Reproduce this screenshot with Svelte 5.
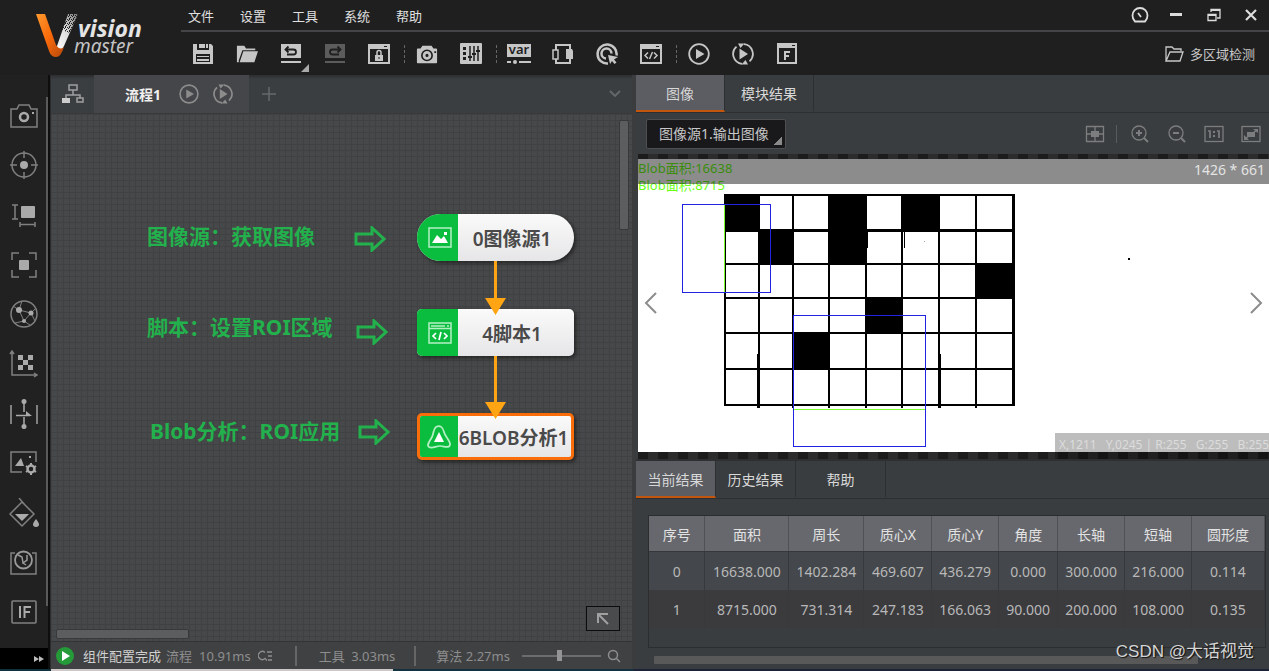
<script>
  const menus = ['文件', '设置', '工具', '系统', '帮助'];

  const toolGroups = [
    [
      { icon: 'save', label: '保存' },
      { icon: 'open', label: '打开' },
      { icon: 'undo', label: '撤销', more: true },
      { icon: 'redo', label: '重做', disabled: true },
      { icon: 'lock', label: '锁定' }
    ],
    [
      { icon: 'camera', label: '相机管理' },
      { icon: 'mixer', label: '控制器管理' }
    ],
    [
      { icon: 'var', label: '全局变量' },
      { icon: 'comm', label: '通信管理' },
      { icon: 'trigger', label: '全局触发' },
      { icon: 'code', label: '全局脚本' }
    ],
    [
      { icon: 'play', label: '单次执行' },
      { icon: 'loop', label: '连续执行' },
      { icon: 'form', label: '运行界面' }
    ]
  ];

  const windowButtons = [
    { icon: 'gauge', label: '性能' },
    { icon: 'minimize', label: '最小化' },
    { icon: 'restore', label: '还原' },
    { icon: 'close', label: '关闭' }
  ];

  const modules = [
    { icon: 'm-camera', label: '采集' },
    { icon: 'm-locate', label: '定位' },
    { icon: 'm-measure', label: '测量' },
    { icon: 'm-recognize', label: '识别' },
    { icon: 'm-deep', label: '深度学习' },
    { icon: 'm-calib', label: '标定' },
    { icon: 'm-align', label: '对位' },
    { icon: 'm-image', label: '图像处理' },
    { icon: 'm-color', label: '颜色处理' },
    { icon: 'm-defect', label: '缺陷检测' },
    { icon: 'm-logic', label: '逻辑工具' }
  ];

  const nodes = [
    { title: '0图像源1', icon: 'n-image', x: 366, y: 100, shape: 'round' },
    { title: '4脚本1', icon: 'n-script', x: 366, y: 195, shape: 'box' },
    { title: '6BLOB分析1', icon: 'n-blob', x: 366, y: 299, shape: 'box', selected: true }
  ];

  const notes = [
    { text: '图像源：获取图像', x: 96, y: 107, ax: 303, ay: 112 },
    { text: '脚本：设置ROI区域', x: 96, y: 198, ax: 305, ay: 205 },
    { text: 'Blob分析：ROI应用', x: 99, y: 302, ax: 307, ay: 305 }
  ];

  const viewButtons = [
    { icon: 'v-zoomin', label: '放大' },
    { icon: 'v-zoomout', label: '缩小' },
    { icon: 'v-actual', label: '1:1' },
    { icon: 'v-fit', label: '适应窗口' }
  ];

  // grid lines of the inspected image
  const xs = [87, 121, 155, 191, 228, 264, 301, 338, 375];
  const ys = [36, 71, 105, 139, 174, 210, 246];
  const filled = [
    [0, 0], [0, 3], [0, 5],
    [1, 1], [1, 3],
    [2, 7],
    [3, 4],
    [4, 2]
  ];

  const columns = [
    { name: '序号', width: 56 },
    { name: '面积', width: 84 },
    { name: '周长', width: 75 },
    { name: '质心X', width: 68 },
    { name: '质心Y', width: 67 },
    { name: '角度', width: 59 },
    { name: '长轴', width: 67 },
    { name: '短轴', width: 67 },
    { name: '圆形度', width: 73 }
  ];
  const totalWidth = columns.reduce((sum, c) => sum + c.width, 0);

  const rows = [
    ['0', '16638.000', '1402.284', '469.607', '436.279', '0.000', '300.000', '216.000', '0.114'],
    ['1', '8715.000', '731.314', '247.183', '166.063', '90.000', '200.000', '108.000', '0.135']
  ];

  let viewTab = $state('图像');
  let resultTab = $state('当前结果');
  let source = $state('图像源1.输出图像');
  let zoom = $state(47);
</script>

<svg class="sprite" aria-hidden="true">
  <defs>
    <linearGradient id="orange" x1="0" y1="0" x2="1" y2="1">
      <stop offset="0" stop-color="#ff9a2e" />
      <stop offset="0.5" stop-color="#f96a0a" />
      <stop offset="1" stop-color="#b5480c" />
    </linearGradient>
    <linearGradient id="silver" x1="1" y1="0" x2="0" y2="1">
      <stop offset="0" stop-color="#777" />
      <stop offset="0.5" stop-color="#ddd" />
      <stop offset="1" stop-color="#fff" />
    </linearGradient>
    <pattern id="speckle" width="4" height="4" patternUnits="userSpaceOnUse">
      <path d="M0 0h1v1H0zM2 1h1v1H2zM1 2h1v2H1zM3 3h1v1H3z" fill="#1f1f1f" />
    </pattern>
  </defs>

  <symbol id="save" viewBox="0 0 22 22">
    <path fill="currentColor" fill-rule="evenodd" d="M1 1h4v6h12V1h2l2 2v18H1zM4 11v8h14v-8z" />
    <path fill="currentColor" d="M7 1h6v4H7zM14 1h2v4h-2zM5 13h12v1H5zM5 16h12v2H5z" />
  </symbol>
  <symbol id="open" viewBox="0 0 24 22">
    <path fill="currentColor" d="M1 2h8l2 3h10v2H7L3 18v2H1zM8 8h16l-4 12H4z" />
  </symbol>
  <symbol id="undo" viewBox="0 0 22 22">
    <path fill="currentColor" d="M1 1h20v14H1zM1 18h20v2H1z" />
    <path fill="none" stroke="#1f1f1f" stroke-width="1.800" d="M6 6.500h7.500a2.500 2.500 0 0 1 0 5H7M8.500 3.500l-3 3 3 3" />
  </symbol>
  <symbol id="redo" viewBox="0 0 22 22">
    <path fill="currentColor" d="M1 1h20v14H1zM1 18h20v2H1z" />
    <path fill="none" stroke="#1f1f1f" stroke-width="1.800" d="M16 6.500H8.500a2.500 2.500 0 0 0 0 5H15M13.500 3.500l3 3-3 3" />
  </symbol>
  <symbol id="lock" viewBox="0 0 22 22">
    <path fill="currentColor" fill-rule="evenodd" d="M0 1h22v20H0zM2 6v13h18V6zM16 3v1h3V3z" />
    <path fill="currentColor" d="M7 12h8v6H7z" />
    <path fill="none" stroke="currentColor" stroke-width="1.500" d="M9 12V9.500a2 2 0 0 1 4 0V12" />
    <path fill="#1f1f1f" d="M10.500 14h1v2h-1z" />
  </symbol>
  <symbol id="camera" viewBox="0 0 24 22">
    <path fill="currentColor" fill-rule="evenodd" d="M7 2h10l2 3h3q1 0 1 1v14q0 1-1 1H2q-1 0-1-1V6q0-1 1-1h3zM12 6a6.500 6.500 0 1 0 0 13 6.500 6.500 0 0 0 0-13zM20 8v2h2V8z" />
    <circle cx="12" cy="12.500" r="3.200" fill="none" stroke="currentColor" stroke-width="3" />
  </symbol>
  <symbol id="mixer" viewBox="0 0 22 22">
    <rect width="22" height="21" rx="1" fill="currentColor" />
    <path stroke="#1f1f1f" stroke-width="1.500" d="M10 3v15M14 3v15M18 3v15" />
    <path fill="#1f1f1f" d="M3 4h3v3H3zM3 9h3v3H3zM3 14h3v3H3zM8 13h4v2H8zM12 10h4v2h-4zM16 7h4v2h-4z" />
  </symbol>
  <symbol id="comm" viewBox="0 0 22 22">
    <path fill="none" stroke="currentColor" stroke-width="2" d="M4 7V2h14v4M4 16v4h14v-4" />
    <rect x="1" y="7" width="5" height="9" fill="none" stroke="currentColor" stroke-width="1.500" />
    <path fill="currentColor" d="M14 6h6l1 2v8h-7z" />
  </symbol>
  <symbol id="trigger" viewBox="0 0 22 22">
    <path fill="none" stroke="currentColor" stroke-width="2.500" d="M12 20.500a9.500 9.500 0 1 1 8.500-8M10 15.500a5 5 0 1 1 5.500-5" />
    <path fill="currentColor" d="M12 12l10 2-4 2.500 2.500 3-2 1.500-2.500-3-2 3z" />
  </symbol>
  <symbol id="code" viewBox="0 0 22 22">
    <path fill="currentColor" fill-rule="evenodd" d="M0 1h22v20H0zM2 6v13h18V6zM16 3v1h3V3z" />
    <path fill="none" stroke="currentColor" stroke-width="1.500" d="M8 9.500L5 12.500l3 3M14 9.500l3 3-3 3M12.500 9l-3 7" />
  </symbol>
  <symbol id="play" viewBox="0 0 22 22">
    <circle cx="11" cy="11" r="9.800" fill="none" stroke="currentColor" stroke-width="1.800" />
    <path fill="currentColor" d="M8 6l8.500 5L8 16z" />
  </symbol>
  <symbol id="loop" viewBox="0 0 22 22">
    <path fill="none" stroke="currentColor" stroke-width="1.800" d="M10 20.800A9.800 9.800 0 0 1 4.500 3.700M12 1.200A9.800 9.800 0 0 1 17.500 18.300" />
    <path fill="currentColor" d="M7.500 5.500L16 11l-8.500 5.500zM6 .5h6.500L8.500 5zM16 21.500H9.500l4-4.500z" />
  </symbol>
  <symbol id="form" viewBox="0 0 22 22">
    <path fill="currentColor" fill-rule="evenodd" d="M1 0h20v21H1zM3 5v14h16V5zM16 2v1h3V2z" />
    <path fill="none" stroke="currentColor" stroke-width="2" d="M9 17V9h5M9 13h4" />
  </symbol>

  <symbol id="gauge" viewBox="0 0 18 18">
    <path fill="none" stroke="currentColor" stroke-width="1.800" d="M4 15.500h10q2.500-2.500 2.500-6a7.500 7.500 0 0 0-15 0q0 3.500 2.500 6zM10 11L7 7" />
  </symbol>
  <symbol id="minimize" viewBox="0 0 18 18"><path fill="currentColor" d="M2 7h12v3H2z" /></symbol>
  <symbol id="restore" viewBox="0 0 18 18">
    <path fill="none" stroke="currentColor" stroke-width="1.300" d="M6 6V3.500h9V12h-3M3 8.500h8v6H3z" />
    <path fill="currentColor" d="M6 3h9v2H6zM3 8h8v2H3z" />
  </symbol>
  <symbol id="close" viewBox="0 0 18 18"><path stroke="currentColor" stroke-width="2.200" d="M4 4l10 10M14 4L4 14" /></symbol>
  <symbol id="folder" viewBox="0 0 20 18">
    <path fill="none" stroke="currentColor" stroke-width="1.300" d="M2 16V2h6l2 2h7v2M2 16L6 7h13l-3 9z" />
  </symbol>

  <symbol id="m-camera" viewBox="0 0 30 30">
    <path fill="none" stroke="currentColor" stroke-width="1.500" d="M2 8h6l2-4h10l2 4h6v18H2z" />
    <circle cx="15" cy="16" r="4" fill="none" stroke="#aaa" stroke-width="2.500" />
    <path fill="#aaa" d="M23 11h2v2h-2z" />
  </symbol>
  <symbol id="m-locate" viewBox="0 0 30 30">
    <circle cx="15" cy="15" r="12" fill="none" stroke="currentColor" stroke-width="1.500" />
    <path stroke="currentColor" stroke-width="1.500" d="M15 1v7M15 22v7M1 15h7M22 15h7" />
    <circle cx="15" cy="15" r="4" fill="#aaa" />
  </symbol>
  <symbol id="m-measure" viewBox="0 0 30 30">
    <path fill="none" stroke="currentColor" stroke-width="1.500" d="M3 5h6M6 5v14M3 19h6M11 22v5M11 24.500h15M26 22v5" />
    <rect x="12" y="6" width="14" height="12" rx="1" fill="#aaa" />
  </symbol>
  <symbol id="m-recognize" viewBox="0 0 30 30">
    <path fill="none" stroke="currentColor" stroke-width="1.500" d="M3 10V3h7M20 3h7v7M27 20v7h-7M10 27H3v-7" />
    <rect x="10" y="10" width="10" height="10" rx="1" fill="#aaa" />
  </symbol>
  <symbol id="m-deep" viewBox="0 0 30 30">
    <circle cx="15" cy="15" r="13" fill="none" stroke="currentColor" stroke-width="1.500" />
    <path fill="none" stroke="currentColor" d="M10 11l12 3-7 8zM4 7l6 4 3-9M22 14l5-5M22 14l4 8M15 22l-9 2M15 22l6 4" />
    <circle cx="10" cy="11" r="3" fill="#aaa" />
    <circle cx="22" cy="14" r="2.500" fill="#aaa" />
    <circle cx="15" cy="22" r="2" fill="#aaa" />
  </symbol>
  <symbol id="m-calib" viewBox="0 0 30 30">
    <path fill="none" stroke="currentColor" stroke-width="1.500" d="M3 3v23h24M1 5l2-3 2 3M25 24l3 2-3 2" />
    <path fill="#aaa" d="M9 6h5v5H9zM19 6h5v5h-5zM14 11h5v5h-5zM9 16h5v5H9zM19 16h5v5h-5z" />
  </symbol>
  <symbol id="m-align" viewBox="0 0 30 30">
    <path stroke="currentColor" stroke-width="2" d="M2 6v19M28 6v19" />
    <path fill="none" stroke="#aaa" stroke-width="1.500" d="M15 2v11M15 18v12M7 16.500h14" />
    <circle cx="15" cy="2.500" r="2.500" fill="#aaa" />
    <circle cx="15" cy="27.500" r="2.500" fill="#aaa" />
    <path fill="#aaa" d="M17 12l6 5h-6z" />
  </symbol>
  <symbol id="m-image" viewBox="0 0 30 30">
    <path fill="none" stroke="currentColor" stroke-width="1.500" d="M13 24H2V4h25v10" />
    <path fill="#aaa" d="M6 18l6-8 3 8zM20 8h2v2h-2z" />
    <circle cx="22" cy="21" r="3.500" fill="none" stroke="#aaa" stroke-width="2.500" />
    <path stroke="#aaa" stroke-width="2" d="M22 15v2M22 25v2M17 18l1.500 1M25.500 23l1.500 1M27 18l-1.500 1M18.500 23L17 24" />
  </symbol>
  <symbol id="m-color" viewBox="0 0 30 30">
    <path fill="none" stroke="currentColor" stroke-width="1.500" d="M13 4l12 12-12 12L1 16zM10 0l6 7" />
    <path fill="#aaa" d="M6 16h14l-7 7zM27 21q-6 7 0 8 6-1 0-8z" />
  </symbol>
  <symbol id="m-defect" viewBox="0 0 30 30">
    <path fill="none" stroke="currentColor" stroke-width="1.500" d="M6 5H2v21h25V5h-4" />
    <circle cx="14.500" cy="12" r="8.500" fill="none" stroke="#999" stroke-width="1.800" />
    <path fill="none" stroke="#999" stroke-width="1.500" d="M9 7l4 2 1 6 4-3V7M14 15l3 2" />
  </symbol>
  <symbol id="m-logic" viewBox="0 0 30 30">
    <rect x="3" y="4" width="24" height="22" rx="1" fill="none" stroke="currentColor" stroke-width="1.600" />
    <path fill="none" stroke="#aaa" stroke-width="2" d="M11 9v12M15.500 21V10H22M15.500 15H21" />
  </symbol>
  <symbol id="more" viewBox="0 0 12 8"><path fill="currentColor" d="M1 1l5 3-5 3zM6 1l5 3-5 3z" /></symbol>

  <symbol id="tree" viewBox="0 0 22 20">
    <path fill="none" stroke="currentColor" stroke-width="1.500" d="M7 1h8v5H7zM11 6v5M4 14v-3h14v3M15 14h6v4h-6z" />
    <path fill="#ccc" d="M0 14h8v5H0z" />
  </symbol>
  <symbol id="plus" viewBox="0 0 14 14"><path stroke="currentColor" stroke-width="1.500" d="M7 0v14M0 7h14" /></symbol>
  <symbol id="chevron" viewBox="0 0 12 8"><path fill="none" stroke="currentColor" stroke-width="1.800" d="M1 1l5 5 5-5" /></symbol>

  <symbol id="n-image" viewBox="0 0 24 22">
    <rect x="1" y="1" width="22" height="19" fill="none" stroke="currentColor" stroke-width="1.500" />
    <path fill="#fff" d="M4 16l5-8 4 4 3-3 4 7zM16 5h3v3h-3z" />
  </symbol>
  <symbol id="n-script" viewBox="0 0 24 22">
    <path fill="none" stroke="currentColor" stroke-width="1.500" d="M1 1h22v20H1zM1 6.500h22M3 4h14M19 4h2" />
    <path fill="none" stroke="#fff" stroke-width="1.700" d="M8 11l-3 3 3 3M16 11l3 3-3 3M13 10l-2 8" />
  </symbol>
  <symbol id="n-blob" viewBox="0 0 24 24">
    <path fill="none" stroke="currentColor" stroke-width="1.700" d="M9 2c4-2 7 0 8 5s7 9 6 13-6 1-10 1-8 3-11 1 1-6 3-10 1-8 4-10z" />
    <path fill="#fff" d="M12 7l5 10H7z" />
  </symbol>
  <symbol id="block-arrow" viewBox="0 0 32 26">
    <path fill="none" stroke="currentColor" stroke-width="3" d="M2 8h16V2l12 11-12 11v-6H2z" />
  </symbol>
  <symbol id="corner" viewBox="0 0 14 14">
    <path fill="none" stroke="currentColor" stroke-width="2" d="M2 11V2h10M2 2l10 10" />
  </symbol>
  <symbol id="search" viewBox="0 0 14 14">
    <path fill="none" stroke="currentColor" stroke-width="1.500" d="M9.500 9.500L13 13" />
    <circle cx="6" cy="6" r="4.500" fill="none" stroke="currentColor" stroke-width="1.500" />
  </symbol>
  <symbol id="detail" viewBox="0 0 14 12">
    <path fill="none" stroke="currentColor" stroke-width="1.300" d="M7 2.500a4 4 0 1 0 0 6l2 2M9 2h5M10 6h4M10 10h4" />
  </symbol>

  <symbol id="v-cross" viewBox="0 0 20 18">
    <path fill="none" stroke="currentColor" stroke-width="1.300" d="M1.500 1.500h17v15h-17zM10 2v14M2 9h16" />
    <path fill="currentColor" d="M6 6h8v6H6z" />
  </symbol>
  <symbol id="v-zoomin" viewBox="0 0 20 20">
    <circle cx="9" cy="9" r="7" fill="none" stroke="currentColor" stroke-width="1.300" />
    <path stroke="currentColor" stroke-width="2" d="M9 6v6M6 9h6M14 14l4 4" />
  </symbol>
  <symbol id="v-zoomout" viewBox="0 0 20 20">
    <circle cx="9" cy="9" r="7" fill="none" stroke="currentColor" stroke-width="1.300" />
    <path stroke="currentColor" stroke-width="2" d="M6 9h6M14 14l4 4" />
  </symbol>
  <symbol id="v-actual" viewBox="0 0 20 18">
    <rect x="1" y="1.500" width="18" height="15" fill="none" stroke="currentColor" stroke-width="1.300" />
    <path fill="none" stroke="currentColor" stroke-width="1.700" d="M4 6h2v7M13 6h2v7" />
    <path fill="currentColor" d="M9 6h2v2H9zM9 10h2v2H9z" />
  </symbol>
  <symbol id="v-fit" viewBox="0 0 20 18">
    <rect x="1" y="1.500" width="18" height="15" fill="none" stroke="currentColor" stroke-width="1.300" />
    <path fill="currentColor" d="M6 7h8v5H6zM12 4h5v4zM3 10v5h5z" />
    <path stroke="currentColor" stroke-width="1.500" d="M4 14L16 5" />
  </symbol>
</svg>

{#snippet icon(name, cls = '')}
  <svg class="icon {cls}" aria-hidden="true"><use href="#{name}" /></svg>
{/snippet}

<div class="app">
  <header class="header">
    <svg class="logo" viewBox="0 0 181 75" role="img" aria-label="vision master">
      <path fill="url(#silver)" d="M68 14h10L64 46q-3 6-8 3z" />
      <path fill="url(#speckle)" d="M68 14h10l-8 19-8-3z" />
      <path fill="url(#orange)" d="M36 14h9l11 31q4 6 8 2-3 10-8 10-5 0-7-6z" />
      <text x="78" y="37" class="logo-vision">vision</text>
      <text x="74" y="53" class="logo-master">master</text>
    </svg>

    <div class="header-main">
      <div class="menu-row">
        <nav class="menus">
          {#each menus as menu}
            <button class="menu">{menu}</button>
          {/each}
        </nav>
        <div class="window-buttons">
          {#each windowButtons as b}
            <button class="window-button" aria-label={b.label}>{@render icon(b.icon, 'icon-18')}</button>
          {/each}
        </div>
      </div>

      <div class="tool-row">
        {#each toolGroups as group, i}
          {#if i > 0}<span class="tool-sep"></span>{/if}
          {#each group as tool}
            <button class="tool" class:tool-more={tool.more} disabled={tool.disabled} aria-label={tool.label}>
              {#if tool.icon === 'var'}
                <svg class="icon icon-var" viewBox="0 0 24 22">
                  <path fill="currentColor" d="M0 1h24v13H0zM0 18h4v2H0zM12 18h12v2H12z" />
                  <circle cx="8" cy="19" r="2" fill="currentColor" />
                  <text x="12" y="11" text-anchor="middle">var</text>
                </svg>
              {:else}
                {@render icon(tool.icon, 'icon-22')}
              {/if}
            </button>
          {/each}
        {/each}
        <div class="project">
          {@render icon('folder', 'icon-20')}
          <span>多区域检测</span>
        </div>
      </div>
    </div>
  </header>

  <div class="workspace">
    <aside class="sidebar">
      <nav class="modules">
        {#each modules as m}
          <button class="module" aria-label={m.label}>{@render icon(m.icon, 'icon-30')}</button>
        {/each}
      </nav>
      <button class="expand" aria-label="展开">{@render icon('more', 'icon-12')}</button>
    </aside>

    <section class="flow">
      <div class="flow-tabs">
        <button class="flow-tree" aria-label="流程管理">{@render icon('tree', 'icon-22')}</button>
        <div class="flow-tab">
          <strong>流程1</strong>
          <button class="plain" aria-label="执行">{@render icon('play', 'icon-20')}</button>
          <button class="plain" aria-label="连续执行">{@render icon('loop', 'icon-20')}</button>
        </div>
        <button class="flow-add" aria-label="新建流程">{@render icon('plus', 'icon-14')}</button>
        <button class="flow-chevron" aria-label="流程列表">{@render icon('chevron', 'icon-12')}</button>
      </div>

      <div class="canvas">
        {#each notes as note}
          <span class="note" style="left: {note.x}px; top: {note.y}px">{note.text}</span>
          <svg class="note-arrow" style="left: {note.ax}px; top: {note.ay}px"><use href="#block-arrow" /></svg>
        {/each}

        {#each nodes as node}
          <div
            class="node node-{node.shape}"
            class:node-selected={node.selected}
            style="left: {node.x}px; top: {node.y}px"
          >
            <span class="node-icon">{@render icon(node.icon, 'icon-24')}</span>
            <span class="node-title">{node.title}</span>
          </div>
        {/each}

        <svg class="links" aria-hidden="true">
          <path stroke="#ffa412" stroke-width="3" d="M444.500 147v40M444.500 242v48" />
          <path fill="#ffa412" d="M434 184h21l-10.500 17zM434 288h21l-10.500 17z" />
        </svg>

        <span class="thumb-v"></span>
        <span class="thumb-h"></span>
        <button class="overview" aria-label="缩略图">{@render icon('corner', 'icon-14')}</button>
      </div>

      <footer class="status">
        <span class="status-run"><svg viewBox="0 0 18 18"><path fill="#fff" d="M6 4l8 5-8 5z" /></svg></span>
        <span class="status-text">组件配置完成</span>
        <span>流程</span>
        <span class="status-time">10.91ms</span>
        {@render icon('detail', 'icon-14')}
        <span class="status-group">工具&ensp;3.03ms</span>
        <span class="status-group status-algo">算法 2.27ms</span>
        <input class="zoom" type="range" min="0" max="100" bind:value={zoom} aria-label="缩放" />
        {@render icon('search', 'icon-14')}
      </footer>
    </section>

    <section class="right">
      <div class="tabs">
        {#each ['图像', '模块结果'] as tab}
          <button class="tab tab-view" class:tab-active={viewTab === tab} onclick={() => (viewTab = tab)}>{tab}</button>
        {/each}
      </div>

      <div class="view-bar">
        <select class="source" bind:value={source} aria-label="图像来源">
          <option>图像源1.输出图像</option>
          <option>图像源1.灰度图像</option>
        </select>
        <div class="view-buttons">
          <button class="view-button" aria-label="十字线">{@render icon('v-cross', 'icon-20')}</button>
          <span class="view-sep"></span>
          {#each viewButtons as b}
            <button class="view-button" aria-label={b.label}>{@render icon(b.icon, 'icon-20')}</button>
          {/each}
        </div>
      </div>

      <div class="viewer">
        <svg class="picture" viewBox="0 0 631 293" preserveAspectRatio="xMinYMin meet">
          {#each xs as x, i}
            <path stroke="#000" stroke-width={i === 8 ? 3 : 2} d="M{x} 35V{i === 0 || i === 8 ? 247 : 249}" />
          {/each}
          {#each ys as y, i}
            <path stroke="#000" stroke-width={i === 1 ? 3 : 2} d="M86 {y}H376" />
          {/each}
          {#each filled as [r, c]}
            <rect x={xs[c]} y={ys[r]} width={xs[c + 1] - xs[c]} height={ys[r + 1] - ys[r]} />
          {/each}
          <path stroke="#000" d="M119.500 195v54M302.500 195v54M266.500 71v18M229.500 71v18" />
          <rect x="490" y="99" width="2" height="2" />
          <rect x="286" y="82" width="1" height="1" fill="#aaa" />
          <g class="roi">
            <rect x="86" y="46" width="1" height="87" fill="#7cff2a" />
            <rect x="156" y="250" width="131" height="1" fill="#7cff2a" />
            <rect x="44.500" y="45.500" width="88" height="88" />
            <rect x="155.500" y="156.500" width="132" height="131" />
          </g>
          <text x="0" y="14" class="blob-text">Blob面积:16638</text>
          <text x="0" y="31" class="blob-text">Blob面积:8715</text>
        </svg>
        <div class="size-bar">1426 * 661</div>
        <button class="nav nav-prev" aria-label="上一张">
          <svg viewBox="0 0 14 24"><path d="M12 2L2 12l10 10" /></svg>
        </button>
        <button class="nav nav-next" aria-label="下一张">
          <svg viewBox="0 0 14 24"><path d="M2 2l10 10L2 22" /></svg>
        </button>
        <div class="pixel-bar">X,1211 &ensp;Y,0245 | R:255 &ensp;G:255 &ensp;B:255</div>
      </div>

      <div class="results">
        <div class="tabs">
          {#each ['当前结果', '历史结果', '帮助'] as tab}
            <button class="tab tab-result" class:tab-active={resultTab === tab} onclick={() => (resultTab = tab)}>{tab}</button>
          {/each}
        </div>
        <div class="table-wrap">
          <table>
            <colgroup>
              {#each columns as c}
                <col style="width: {(c.width / totalWidth) * 100}%" />
              {/each}
            </colgroup>
            <thead>
              <tr>
                {#each columns as c}<th>{c.name}</th>{/each}
              </tr>
            </thead>
            <tbody>
              {#each rows as row}
                <tr>
                  {#each row as cell}<td>{cell}</td>{/each}
                </tr>
              {/each}
            </tbody>
          </table>
        </div>
        <div class="thumb-results"></div>
      </div>
    </section>
  </div>

  <div class="taskbar-edge"></div>
  <div class="watermark">CSDN @大话视觉</div>
</div>

<style>
  :global(body) {
    background: #1f1f1f;
  }

  .sprite {
    position: absolute;
    width: 0;
    height: 0;
  }

  .app {
    position: relative;
    display: flex;
    flex-direction: column;
    height: 100vh;
    min-height: 620px;
    overflow: hidden;
    font-family: 'Noto Sans', 'Noto Sans CJK SC', sans-serif;
    font-size: 14px;
    color: #d0d0d0;
  }

  button,
  select {
    margin: 0;
    padding: 0;
    border: none;
    background: none;
    color: inherit;
    font: inherit;
  }

  .icon {
    display: block;
    flex: none;
  }

  .icon-12 { width: 12px; height: 8px; }
  .icon-14 { width: 14px; height: 14px; }
  .icon-18 { width: 18px; height: 18px; }
  .icon-20 { width: 20px; height: 20px; }
  .icon-22 { width: 22px; height: 22px; }
  .icon-24 { width: 24px; height: 24px; }
  .icon-30 { width: 30px; height: 30px; }

  .icon-var {
    width: 24px;
    height: 22px;
  }

  .icon-var text {
    font-size: 13px;
    font-weight: 600;
    fill: #1f1f1f;
  }

  /* ========== Header ========== */
  .header {
    display: flex;
    flex: none;
    background: #1f1f1f;
  }

  .logo {
    flex: none;
    width: 181px;
    height: 75px;
  }

  .logo-vision {
    font-size: 23px;
    font-weight: 700;
    font-style: italic;
    fill: #e4e4e4;
  }

  .logo-master {
    font-size: 19px;
    font-style: italic;
    fill: #c4c4c4;
  }

  .header-main {
    flex: 1;
    min-width: 0;
  }

  .menu-row {
    display: flex;
    justify-content: space-between;
    height: 30px;
    border-bottom: 2px solid #454449;
  }

  .menus {
    display: flex;
    gap: 26px;
    padding-left: 7px;
  }

  .menu {
    font-size: 13px;
    color: #e0e0e0;
  }

  .window-buttons {
    display: flex;
    color: #dcdcdc;
  }

  .window-button {
    display: flex;
    align-items: center;
    justify-content: center;
    width: 37px;
  }

  .tool-row {
    display: flex;
    align-items: center;
    height: 43px;
  }

  .tool {
    position: relative;
    display: flex;
    align-items: center;
    justify-content: center;
    width: 44px;
    height: 42px;
    color: #c6c6c6;
  }

  .tool:disabled {
    color: #5c5c5c;
  }

  .tool-more::after {
    content: '';
    position: absolute;
    right: 4px;
    bottom: 3px;
    border-left: 8px solid transparent;
    border-bottom: 8px solid #aaa;
  }

  .tool-sep {
    width: 4px;
    height: 18px;
    box-sizing: border-box;
    border-right: 1px dashed #666;
  }

  .project {
    display: flex;
    align-items: center;
    gap: 6px;
    margin-left: auto;
    padding-right: 14px;
    font-size: 13px;
    color: #c8c8c8;
  }

  /* ========== Workspace ========== */
  .workspace {
    display: grid;
    flex: 1;
    grid-template-columns: 50px minmax(0, 582fr) minmax(0, 637fr);
    min-height: 0;
  }

  .sidebar {
    display: flex;
    flex-direction: column;
    box-sizing: border-box;
    border-right: 2px solid #0e0e0e;
    background: #212122;
  }

  .modules {
    position: relative;
    display: flex;
    flex: 1;
    flex-direction: column;
    min-height: 0;
    padding: 16px 0 11px;
    color: #808080;
  }

  .modules::after {
    content: '';
    position: absolute;
    top: 22px;
    right: 0;
    bottom: 42px;
    width: 2px;
    background: #5a5a5b;
  }

  .module {
    display: flex;
    flex: 1;
    align-items: center;
    justify-content: center;
  }

  .expand {
    display: flex;
    align-items: center;
    justify-content: flex-end;
    height: 21px;
    padding-right: 3px;
    background: #000;
    color: #bbb;
  }

  /* ========== Flow ========== */
  .flow {
    display: flex;
    flex-direction: column;
    min-width: 0;
    min-height: 0;
    border-left: 1px solid #2c2d2e;
  }

  .flow-tabs {
    display: flex;
    height: 38px;
    border-bottom: 1px solid #38393b;
    background: linear-gradient(#2b2d2f, #3b3e41 4px);
    color: #8c8c8c;
  }

  .flow-tree {
    display: flex;
    align-items: center;
    justify-content: center;
    width: 43px;
    color: #a0a0a0;
  }

  .flow-tab {
    display: flex;
    align-items: center;
    gap: 14px;
    padding: 0 16px 0 31px;
    background: #454649;
  }

  .flow-tab strong {
    margin-right: 4px;
    font-size: 14px;
    color: #f0f0f0;
  }

  .plain {
    display: flex;
  }

  .flow-add {
    display: flex;
    align-items: center;
    justify-content: center;
    width: 40px;
    color: #66696b;
  }

  .flow-chevron {
    display: flex;
    align-items: center;
    margin-left: auto;
    padding-right: 11px;
    color: #66696b;
  }

  .canvas {
    position: relative;
    flex: 1;
    min-height: 0;
    overflow: hidden;
    background-color: #474849;
    background-image:
      linear-gradient(90deg, #404142 1px, transparent 1px),
      linear-gradient(#404142 1px, transparent 1px);
    background-size: 6px 6px;
  }

  .note {
    position: absolute;
    font-size: 21px;
    font-weight: 700;
    line-height: 30px;
    white-space: nowrap;
    color: #22b14c;
  }

  .note-arrow {
    position: absolute;
    width: 32px;
    height: 26px;
    color: #22b14c;
  }

  .node {
    position: absolute;
    display: flex;
    box-sizing: border-box;
    width: 157px;
    height: 47px;
    overflow: hidden;
    border-radius: 5px;
    background: linear-gradient(#fafafa, #e6e6e8);
    box-shadow: 2px 2px 4px rgba(0, 0, 0, 0.5);
  }

  .node-round {
    border-radius: 24px;
  }

  .node-selected {
    border: 3px solid #f96d0b;
  }

  .node-icon {
    display: flex;
    flex: none;
    align-items: center;
    justify-content: center;
    box-sizing: border-box;
    width: 41px;
    padding-left: 4px;
    background: #0bbd3f;
    color: #b4f0c4;
  }

  .node-selected .node-icon {
    width: 38px;
    padding-left: 0;
  }

  .node-title {
    display: flex;
    flex: 1;
    align-items: center;
    justify-content: center;
    min-width: 0;
    padding-right: 8px;
    font-size: 19px;
    font-weight: 600;
    white-space: nowrap;
    color: #4a4a4a;
  }

  .node-selected .node-title {
    padding-right: 2px;
  }

  .links {
    position: absolute;
    inset: 0;
    width: 100%;
    height: 100%;
    pointer-events: none;
  }

  .thumb-v,
  .thumb-h {
    position: absolute;
    box-sizing: border-box;
    border: 1px solid #38393a;
    border-radius: 2px;
    background: #5c5d5e;
  }

  .thumb-v {
    top: 6px;
    right: 3px;
    width: 10px;
    height: 110px;
  }

  .thumb-h {
    bottom: 2px;
    left: 5px;
    width: 133px;
    height: 10px;
  }

  .overview {
    position: absolute;
    right: 12px;
    bottom: 10px;
    display: flex;
    align-items: center;
    justify-content: center;
    width: 34px;
    height: 25px;
    border: 1px solid #0c0c0c;
    background: #4a4b4c;
    color: #a0a0a0;
  }

  .status {
    display: flex;
    align-items: center;
    height: 27px;
    padding: 0 11px 0 5px;
    border-top: 1px solid #333435;
    background: #404143;
    font-size: 13px;
    white-space: nowrap;
    color: #8e8e8e;
  }

  .status-run {
    display: flex;
    width: 18px;
    height: 18px;
    margin-right: 9px;
    border-radius: 50%;
    background: #249a38;
  }

  .status-text {
    margin-right: 5px;
    color: #d0d0d0;
  }

  .status-time {
    margin: 0 7px;
  }

  .status-group {
    margin-left: 23px;
    padding-left: 22px;
    border-left: 2px solid #666;
    line-height: 20px;
  }

  .status-algo {
    margin-left: 19px;
    padding-left: 20px;
  }

  .zoom {
    flex: 1;
    min-width: 40px;
    height: 12px;
    margin: 0 6px 0 12px;
    appearance: none;
    background: linear-gradient(#6c6c6e, #6c6c6e) center / 100% 2px no-repeat;
  }

  .zoom::-webkit-slider-thumb {
    appearance: none;
    width: 5px;
    height: 11px;
    background: #949496;
  }

  /* ========== Right panel ========== */
  .right {
    display: flex;
    flex-direction: column;
    min-width: 0;
    min-height: 0;
    border-left: 4px solid #3a3c3e;
    background: #3a3d3f;
  }

  .tabs {
    display: flex;
    height: 38px;
    box-sizing: border-box;
    border-bottom: 1px solid #2d2f31;
  }

  .tab {
    box-sizing: border-box;
    border-right: 1px solid #2d2f31;
    border-bottom: 2px solid transparent;
    background-clip: padding-box;
    color: #d8d8d8;
  }

  .tab-view {
    width: 89px;
  }

  .tab-result {
    min-width: 80px;
  }

  .tab-result:last-child {
    min-width: 90px;
  }

  .tab-active {
    border-bottom-color: #c2560f;
    background-color: #5b5d62;
  }

  .view-bar {
    display: flex;
    align-items: center;
    justify-content: space-between;
    height: 41px;
    padding-left: 10px;
  }

  .source {
    width: 140px;
    height: 30px;
    padding-left: 12px;
    border: 1px solid #4c4e50;
    border-radius: 2px;
    appearance: none;
    background: linear-gradient(135deg, transparent 50%, #8a8a8a 50%) right 3px bottom 3px / 8px 8px no-repeat #19191b;
    color: #c8c8c8;
  }

  .view-buttons {
    display: flex;
    align-items: center;
    color: #7c7d7e;
  }

  .view-button {
    display: flex;
    align-items: center;
    justify-content: center;
    width: 37px;
    height: 30px;
  }

  .view-sep {
    width: 3px;
    height: 18px;
    margin-right: 4px;
    border-right: 1px solid #5a5b5c;
  }

  .viewer {
    position: relative;
    flex: 1;
    min-height: 0;
    margin-left: 2px;
    padding: 5px 0 7px;
    background: repeating-linear-gradient(90deg, #1c1c1c 0 10px, #2c2c2c 10px 20px);
  }

  .picture {
    display: block;
    width: 100%;
    height: 100%;
    background: #fff;
    shape-rendering: crispEdges;
  }

  .roi rect:not([fill]) {
    fill: none;
    stroke: #2323e6;
  }

  .blob-text {
    font-size: 13px;
    fill: #6bff14;
  }

  .size-bar {
    position: absolute;
    top: 5px;
    right: 0;
    left: 0;
    height: 25px;
    padding-right: 4px;
    background: rgba(0, 0, 0, 0.45);
    line-height: 22px;
    text-align: right;
    color: #e4e4e4;
  }

  .nav {
    position: absolute;
    top: 49%;
    width: 14px;
    height: 24px;
    margin-top: -12px;
  }

  .nav svg {
    display: block;
    fill: none;
    stroke: #8c8c8c;
    stroke-width: 2;
  }

  .nav-prev {
    left: 6px;
  }

  .nav-next {
    right: 6px;
  }

  .pixel-bar {
    position: absolute;
    right: 0;
    bottom: 0;
    height: 26px;
    padding-left: 4px;
    background: rgba(0, 0, 0, 0.26);
    font-size: 12px;
    line-height: 24px;
    white-space: nowrap;
    color: #dcdcdc;
  }

  /* ========== Results ========== */
  .results {
    flex: none;
    padding-bottom: 5px;
    border-top: 2px solid #2d2f31;
  }

  .table-wrap {
    height: 131px;
    margin: 16px 3px 8px 12px;
    border: 1px solid #2b2d2f;
  }

  table {
    width: 100%;
    border-collapse: collapse;
    table-layout: fixed;
  }

  th,
  td {
    height: 38px;
    padding: 0;
    border-right: 1px solid #38393c;
    font-weight: 400;
    text-align: center;
    color: #b8b8b8;
  }

  th {
    height: 35px;
    border-right-color: #505155;
    border-bottom: 1px solid #35373a;
    background: #67686d;
    color: #e2e2e2;
  }

  tbody tr:nth-child(odd) {
    background: #44474b;
  }

  tbody tr:nth-child(even) {
    background: #3b3b3e;
  }

  .thumb-results {
    width: 86%;
    height: 8px;
    margin-left: 18px;
    border-radius: 1px;
    background: #59595a;
  }

  .taskbar-edge {
    flex: none;
    height: 2px;
    background: linear-gradient(90deg, #10303c 4%, #cfc8c8 4% 31%, #15303f 31% 50%, #1c2238 50%);
  }

  .watermark {
    position: absolute;
    right: 15px;
    bottom: 6px;
    font-family: 'Liberation Sans', 'Noto Sans CJK SC', sans-serif;
    font-size: 17px;
    line-height: 26px;
    color: #d4d4d4;
    text-shadow: 1px 1px 1px #111;
  }
</style>
